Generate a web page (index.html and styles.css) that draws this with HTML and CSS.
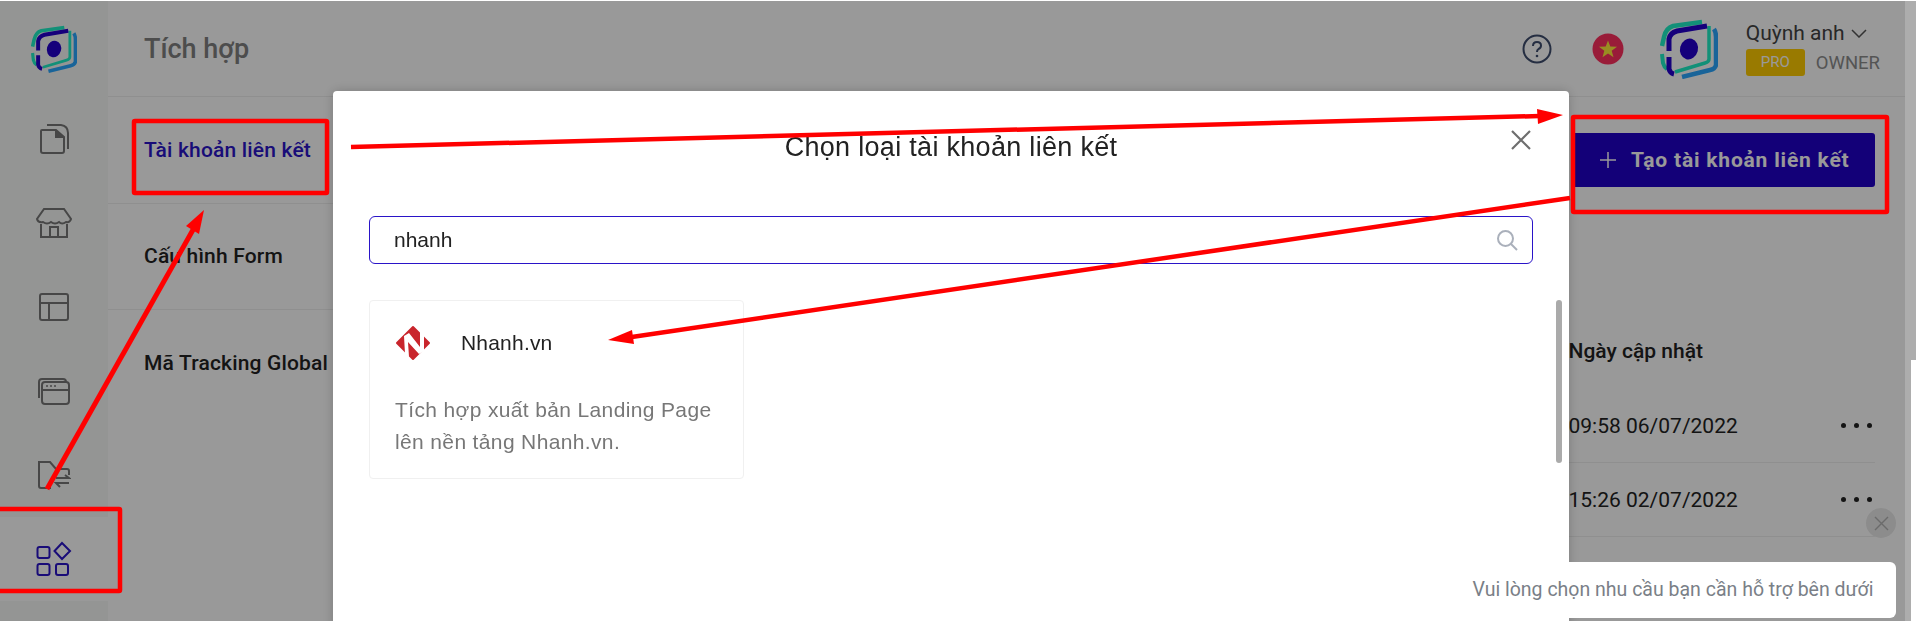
FILE: index.html
```html
<!DOCTYPE html>
<html>
<head>
<meta charset="utf-8">
<title>Tích hợp</title>
<link rel="stylesheet" href="styles.css">
</head>
<body>

<svg class="defs" width="0" height="0">
	<symbol id="brand" viewBox="0 0 58 60" fill="none">
		<path d="M2 27 L4 18 Q6 9 13 7 L42 3" stroke="#1ef0c8" stroke-width="4.500"/>
		<path d="M2 35 L3 44 Q4 48 7 50" stroke="#1ef0c8" stroke-width="4"/>
		<path d="M49 7 V40 Q49 43 45 44 L15 53" stroke="#1ef0c8" stroke-width="3.500"/>
		<path d="M47 7 L17 12 Q10 14 9 20 V32" stroke="#2400cd" stroke-width="5"/>
		<path d="M9 38 V50 Q10 54 14 55" stroke="#2400cd" stroke-width="5"/>
		<path d="M54 10 Q56 13 56 18 V46 Q55 50 50 51 L22 58" stroke="#2ba7ff" stroke-width="4.500"/>
		<ellipse cx="29" cy="30" rx="9" ry="10.500" transform="rotate(15 29 30)" fill="#2400cd"/>
	</symbol>
</svg>

<div id="container">

	<div id="sidebar">
		<div class="side_logo">
			<svg width="46" height="48"><use href="#brand"/></svg>
		</div>
		<div class="side_item">
			<svg width="32" height="32" viewBox="0 0 32 32" fill="none">
				<path d="M4 7 H18 L26 14 V28 Q26 30 24 30 H5 Q3 30 3 28 V8 Q3 7 4 7 Z"/>
				<path d="M18 7 V14 H26" fill="#777"/>
				<path d="M9 2 H23 Q30 3 30 10 V26"/>
			</svg>
		</div>
		<div class="side_item">
			<svg width="38" height="32" viewBox="0 0 38 32" fill="none">
				<path d="M9 2 H29 L36 12 Q35 16 31 15 Q27 18 24 15 Q20 18 16 15 Q12 18 8 15 Q3 16 2 12 Z"/>
				<path d="M6 17 V30 H32 V17"/>
				<path d="M15 30 V20 H23 V30"/>
			</svg>
		</div>
		<div class="side_item">
			<svg width="32" height="30" viewBox="0 0 32 30" fill="none">
				<rect x="2" y="2" width="28" height="26" rx="2"/>
				<path d="M2 11 H30"/>
				<path d="M11 11 V28"/>
			</svg>
		</div>
		<div class="side_item">
			<svg width="34" height="28" viewBox="0 0 34 28" fill="none">
				<path d="M2 21 V5 Q2 2 5 2 H26 Q29 2 29 5"/>
				<rect x="5" y="5" width="27" height="22" rx="3"/>
				<path d="M5 13 H32"/>
				<path d="M9 9 H11 M13 9 H15 M17 9 H19" stroke-width="1.500"/>
			</svg>
		</div>
		<div class="side_item">
			<svg width="34" height="30" viewBox="0 0 34 30" fill="none">
				<path d="M14 28 H4 Q2 28 2 26 V2 H13 L19 9 H30 Q32 9 32 11 V15"/>
				<path d="M19 18 H32 L28 15 M32 23 H19 L23 27"/>
			</svg>
		</div>
		<div class="side_item side_active">
			<svg width="36" height="36" viewBox="0 0 36 36" fill="none">
				<rect x="1.500" y="6" width="12" height="11" rx="2"/>
				<rect x="1.500" y="23" width="12" height="11" rx="2"/>
				<rect x="20" y="23" width="12" height="11" rx="2"/>
				<path d="M26 2 L34 10 L26 18 L18.500 10 Z"/>
			</svg>
		</div>
	</div>

	<div id="main">
		<div id="header">
			<div class="page_title">Tích hợp</div>
			<div class="header_right">
				<svg class="help_icon" width="30" height="30" viewBox="0 0 30 30" fill="none">
					<circle cx="15" cy="15" r="13.500" stroke="#3f4d6e" stroke-width="2"/>
					<path d="M11 12 Q11 8 15 8 Q19 8 19 11.500 Q19 14 16.500 15 Q15 16 15 18" stroke="#3f4d6e" stroke-width="2"/>
					<circle cx="15" cy="22" r="1.300" fill="#3f4d6e"/>
				</svg>
				<svg class="flag_icon" width="32" height="32" viewBox="0 0 32 32">
					<circle cx="16" cy="16" r="15.500" fill="#ff3060"/>
					<polygon points="16,7.500 18.300,13.500 25,13.700 19.700,17.800 21.500,24.200 16,20.500 10.500,24.200 12.300,17.800 7,13.700 13.700,13.500" fill="#ffe93a"/>
				</svg>
				<svg class="avatar" width="58" height="60"><use href="#brand"/></svg>
				<div class="user_box">
					<div class="user_name">Quỳnh anh
						<svg width="16" height="9" viewBox="0 0 16 9" fill="none"><path d="M1 1 L8 8 L15 1" stroke="#555" stroke-width="1.500"/></svg>
					</div>
					<div class="user_plan">
						<span class="pro_tag">PRO</span>
						<span class="owner_tag">OWNER</span>
					</div>
				</div>
			</div>
		</div>

		<div id="content">
			<div id="tabs">
				<div class="tab tab_active">Tài khoản liên kết</div>
				<div class="tab">Cấu hình Form</div>
				<div class="tab tab_last">Mã Tracking Global</div>
			</div>
			<div id="panel">
				<div class="panel_top">
					<div class="add_btn">
						<svg width="18" height="18" viewBox="0 0 18 18" fill="none"><path d="M9 1 V17 M1 9 H17" stroke="#fff" stroke-width="1.500"/></svg>
						Tạo tài khoản liên kết
					</div>
				</div>
				<div class="table_head">Ngày cập nhật</div>
				<div class="table_row">
					<span>09:58 06/07/2022</span>
					<span class="row_dots"><i></i><i></i><i></i></span>
				</div>
				<div class="table_row">
					<span>15:26 02/07/2022</span>
					<span class="row_dots"><i></i><i></i><i></i></span>
				</div>
			</div>
		</div>
	</div>
</div>

<div id="backdrop"></div>

<div id="modal">
	<div class="modal_title">Chọn loại tài khoản liên kết</div>
	<svg class="modal_close" width="20" height="20" viewBox="0 0 20 20" fill="none"><path d="M1 1 L19 19 M19 1 L1 19" stroke="#6e6e6e" stroke-width="2.200"/></svg>
	<div class="search_box">
		<span>nhanh</span>
		<svg width="22" height="22" viewBox="0 0 22 22" fill="none"><circle cx="9.500" cy="9.500" r="7.500" stroke="#aab0bb" stroke-width="2"/><path d="M15 15 L21 21" stroke="#aab0bb" stroke-width="2"/></svg>
	</div>
	<div class="modal_body">
		<div class="app_card">
			<div class="app_top">
				<svg width="36" height="36" viewBox="0 0 36 36">
					<polygon points="18,2 34,18 18,34 2,18" fill="#c9252c" stroke="#c9252c" stroke-width="2" stroke-linejoin="round"/>
					<path d="M9 11 L14 8 L25 22 V6 L29 9 V26 L24 29 L13 17 L14 32 L10 29 Z" fill="#fff"/>
				</svg>
				<span class="app_name">Nhanh.vn</span>
			</div>
			<div class="app_desc">Tích hợp xuất bản Landing Page<br>lên nền tảng Nhanh.vn.</div>
		</div>
		<div class="modal_scroll"></div>
	</div>
</div>

<div class="page_scroll"></div>

<div class="chat_close">
	<svg width="15" height="15" viewBox="0 0 15 15" fill="none"><path d="M1 1 L14 14 M14 1 L1 14" stroke="#6b6b6b" stroke-width="1.400"/></svg>
</div>
<div class="chat_tip">Vui lòng chọn nhu cầu bạn cần hỗ trợ bên dưới</div>

<!-- annotations drawn on top of the screenshot -->
<svg id="marks" width="1916" height="621" viewBox="0 0 1916 621" fill="none">
	<rect x="-6" y="509" width="126" height="82" rx="1" stroke="#f00" stroke-width="4.500"/>
	<rect x="134" y="121" width="193" height="72" rx="1" stroke="#f00" stroke-width="4.500"/>
	<rect x="1573" y="117" width="314" height="95" rx="1" stroke="#f00" stroke-width="4.500"/>
	<path d="M351 147 L1540 116" stroke="#f00" stroke-width="4.500"/>
	<polygon points="1563,115 1537,109 1538,124" fill="#f00"/>
	<path d="M1570 198 L625 338" stroke="#f00" stroke-width="4.500"/>
	<polygon points="608,340 632,330 634,344" fill="#f00"/>
	<path d="M47 489 L194 228" stroke="#f00" stroke-width="5"/>
	<polygon points="204,210 186,226 199,234" fill="#f00"/>
</svg>

</body>
</html>
```

FILE: styles.css
```css
* {box-sizing: border-box;}

html, body {
	margin: 0;
	padding: 0;
	height: 100%;
	overflow: hidden;
}

body {
	background-color: #fff;
	font-family: Roboto, "Liberation Sans", sans-serif;
	color: #222;
}

.defs {
	display: block;
}

#container {
	display: flex;
	width: 1905px;
	height: 621px;
	padding-top: 1px;
}

#sidebar {
	width: 108px;
	flex-shrink: 0;
	background-color: #f7f9f7;
}

.side_logo {
	height: 96px;
	display: flex;
	align-items: center;
	justify-content: center;
}

.side_item {
	height: 84px;
	display: flex;
	align-items: center;
	justify-content: center;
}

.side_item svg {
	stroke: #777;
	stroke-width: 2;
}

.side_active {
	background-color: #fff;
}

.side_active svg {
	stroke: #2a14c8;
}

#main {
	flex: 1;
	display: flex;
	flex-direction: column;
}

#header {
	height: 96px;
	padding: 0 25px 0 36px;
	display: flex;
	align-items: center;
	justify-content: space-between;
	border-bottom: 1px solid #eee;
}

.page_title {
	font-size: 27px;
	font-weight: 500;
	color: #808080;
}

.header_right {
	display: flex;
	align-items: center;
}

.help_icon {
	margin-right: 40px;
}

.flag_icon {
	margin-right: 36px;
}

.avatar {
	margin-right: 28px;
}

.user_name {
	font-size: 21px;
	color: #444;
	display: flex;
	align-items: center;
	gap: 6px;
}

.user_plan {
	margin-top: 4px;
	display: flex;
	align-items: center;
	gap: 11px;
}

.pro_tag {
	width: 59px;
	height: 27px;
	line-height: 27px;
	text-align: center;
	border-radius: 3px;
	background-color: #ffcc00;
	color: #fff;
	font-size: 15px;
}

.owner_tag {
	font-size: 18.500px;
	color: #8c8c8c;
}

#content {
	flex: 1;
	display: flex;
}

#tabs {
	width: 225px;
	flex-shrink: 0;
}

.tab {
	height: 106.500px;
	padding-left: 36px;
	display: flex;
	align-items: center;
	font-size: 21px;
	font-weight: 500;
	letter-spacing: 0.17px;
	white-space: nowrap;
	border-bottom: 1px solid #eee;
}

.tab_active {
	color: #2a14c8;
}

.tab_last {
	border-bottom: 0;
}

#panel {
	flex: 1;
	padding: 36px 30px 0 1235.500px;
	white-space: nowrap;
}

.panel_top {
	display: flex;
	justify-content: flex-end;
}

.add_btn {
	width: 304px;
	height: 54px;
	flex-shrink: 0;
	display: flex;
	align-items: center;
	gap: 14px;
	padding-left: 28px;
	background-color: #2000c8;
	color: #fff;
	border-radius: 3px;
	font-size: 21px;
	font-weight: 700;
	letter-spacing: 0.8px;
}

.table_head {
	margin-top: 152px;
	margin-bottom: 26px;
	font-size: 21px;
	font-weight: 500;
}

.table_row {
	height: 74px;
	display: flex;
	align-items: center;
	justify-content: space-between;
	font-size: 21px;
	border-bottom: 1px solid #eee;
}

.row_dots {
	display: flex;
	gap: 8px;
	padding-right: 3px;
}

.row_dots i {
	width: 5px;
	height: 5px;
	border-radius: 50%;
	background-color: #222;
}

#backdrop {
	position: fixed;
	left: 0;
	top: 1px;
	right: 5px;
	bottom: 0;
	background-color: rgba(0, 0, 0, 0.4);
}

#modal {
	position: fixed;
	left: 333px;
	top: 91px;
	width: 1236px;
	height: 540px;
	padding: 36px 36px 0;
	background-color: #fff;
	border-radius: 4px;
	box-shadow: 0 0 12px rgba(0, 0, 0, 0.2);
	font-family: "Liberation Sans", Arial, sans-serif;
}

.modal_title {
	text-align: center;
	font-size: 27px;
	letter-spacing: 0.3px;
	color: #222;
	line-height: 40px;
}

.modal_close {
	position: absolute;
	right: 38px;
	top: 39px;
}

.search_box {
	margin-top: 49px;
	height: 48px;
	display: flex;
	align-items: center;
	justify-content: space-between;
	padding: 0 14px 0 24px;
	border: 1px solid #2a14c8;
	border-radius: 6px;
	font-size: 21px;
	color: #222;
}

.modal_body {
	margin-top: 36px;
	position: relative;
}

.app_card {
	width: 375px;
	height: 179px;
	padding: 24px 25px;
	border: 1px solid #f0f0f0;
	border-radius: 4px;
}

.app_top {
	display: flex;
	align-items: center;
	gap: 30px;
}

.app_name {
	font-size: 21px;
	letter-spacing: 0.2px;
	color: #222;
}

.app_desc {
	margin-top: 33px;
	font-size: 21px;
	line-height: 32px;
	letter-spacing: 0.36px;
	color: #777;
}

.modal_scroll {
	position: absolute;
	right: -29px;
	top: 0;
	width: 6px;
	height: 163px;
	border-radius: 3px;
	background-color: #aaa;
}

.page_scroll {
	position: fixed;
	left: 1905px;
	top: 1px;
	bottom: 0;
	width: 6px;
	background-color: #adadad;
}

.page_scroll::after {
	content: "";
	position: absolute;
	left: 6px;
	top: 0;
	width: 5px;
	height: 359px;
	background-color: #adadad;
}

.chat_close {
	position: fixed;
	left: 1866px;
	top: 508px;
	width: 30px;
	height: 30px;
	border-radius: 50%;
	background-color: #8c8c8c;
	display: flex;
	align-items: center;
	justify-content: center;
}

.chat_tip {
	position: fixed;
	left: 1450px;
	top: 562px;
	width: 446px;
	height: 56px;
	line-height: 55px;
	text-align: center;
	background-color: #fff;
	border-radius: 6px;
	font-size: 19.500px;
	color: #7a7f87;
}

#marks {
	position: fixed;
	left: 0;
	top: 0;
}
```
